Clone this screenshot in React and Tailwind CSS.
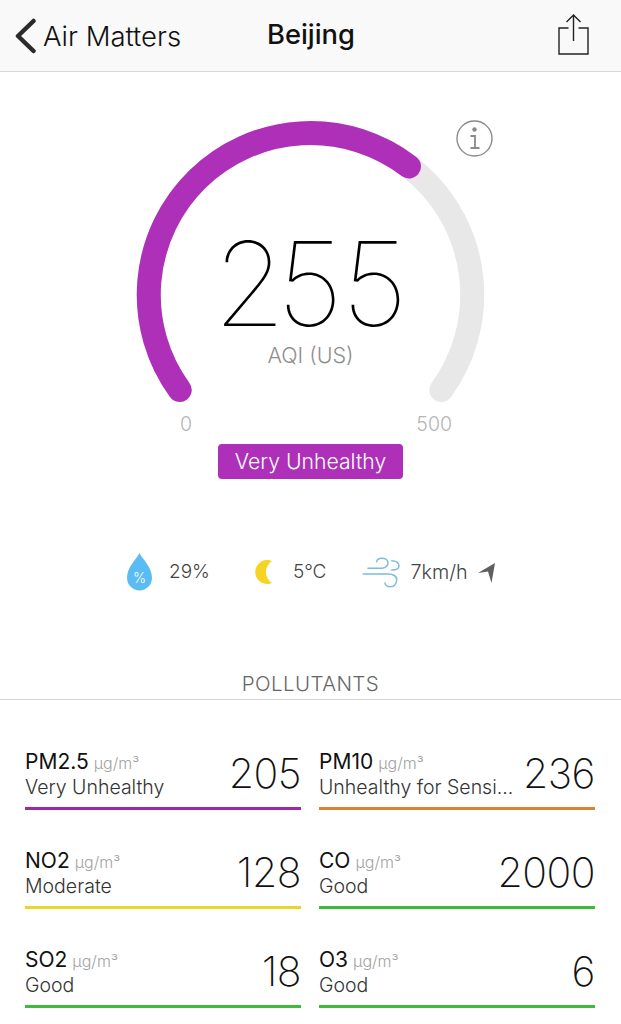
const font = { fontFamily: 'Inter, "Liberation Sans", sans-serif' };

const items = [
  ["PM2.5", "Very Unhealthy", "205", "bg-[#9c27a8]"],
  ["PM10", "Unhealthy for Sensi...", "236", "bg-[#e0812b]"],
  ["NO2", "Moderate", "128", "bg-[#e6d82a]"],
  ["CO", "Good", "2000", "bg-[#3dbb3a]"],
  ["SO2", "Good", "18", "bg-[#3dbb3a]"],
  ["O3", "Good", "6", "bg-[#3dbb3a]"],
];

function Item({ name, status, value, bar }) {
  return (
    <div className="h-[99px] flex flex-col justify-end">
      <div className="flex items-end justify-between h-[60px]">
        <div className="min-w-0 pb-[7px]">
          <div className="flex items-baseline gap-[5px] leading-[25px]">
            <span className="text-[21px] text-[#111]">{name}</span>
            <span className="text-[16px] font-light text-[#a3a3a3]">µg/m³</span>
          </div>
          <div className="text-[19.5px] font-light text-[#333] leading-[22px] whitespace-nowrap">{status}</div>
        </div>
        <div className="text-[41px] font-[250] text-[#111] leading-[50px] tracking-[-0.5px] pb-[7px]">{value}</div>
      </div>
      <div className={`h-[3px] mt-[2px] mb-[1px] ${bar}`} />
    </div>
  );
}

export default function App() {
  return (
    <div style={font} className="w-[621px] h-[1024px] bg-white overflow-hidden flex flex-col">
      <header className="relative h-[72px] bg-[#f9f9f9] border-b border-[#d9d9d9] flex items-center justify-between pl-[14px] pr-[32px] shrink-0">
        <div className="flex items-center gap-[6px]">
          <svg width="23" height="36" viewBox="0 0 23 36" fill="none">
            <path d="M19.5 3 L4 18 L19.5 33" stroke="#2b2b2b" strokeWidth="4.5" strokeLinecap="round" strokeLinejoin="round" />
          </svg>
          <span className="text-[27.5px] font-light text-[#111] mt-[2px]">Air Matters</span>
        </div>
        <span className="absolute left-[267px] top-[17px] text-[27.3px] font-medium text-[#111] leading-[36px]">Beijing</span>
        <svg width="31" height="41" viewBox="0 0 31 41" fill="none" stroke="#222" strokeWidth="1.4" className="mb-[2px]">
          <path d="M10.5 14 H1 V40 H30 V14 H20.5" />
          <path d="M15.5 1 V27 M8.5 8 L15.5 1 L22.5 8" />
        </svg>
      </header>

      <section className="relative h-[430px] shrink-0">
        <svg className="absolute left-0 top-0" width="621" height="430" viewBox="0 72 621 430" fill="none">
          <path d="M179.7 390 A161.75 161.75 0 1 1 441.3 390" stroke="#e8e8e8" strokeWidth="24" strokeLinecap="round" />
          <path d="M179.7 390 A161.75 161.75 0 0 1 409 166.55" stroke="#ae30b8" strokeWidth="24" strokeLinecap="round" />
          <circle cx="474.5" cy="138.5" r="17.5" stroke="#8a8a8a" strokeWidth="1.4" />
          <circle cx="474.5" cy="129.5" r="2.2" fill="#8a8a8a" />
          <path d="M470.5 136 H475 V148 M470.5 148 H479.5" stroke="#8a8a8a" strokeWidth="1.8" />
        </svg>
        <div className="relative flex flex-col items-center">
          <div className="mt-[153px] text-[117px] font-thin text-black leading-[118px] tracking-[-1px] pr-[1px]">
            <span className="tracking-[-9px]">2</span>55
          </div>
          <div className="mt-[-1px] text-[21.5px] font-light text-[#8f8f8f] leading-[26px]">AQI (US)</div>
          <div className="w-[347px] flex justify-between mt-[44px] text-[19.5px] font-light text-[#b5b5b5] leading-[24px] pl-[43px] pr-[32px]">
            <span>0</span>
            <span>500</span>
          </div>
          <div className="mt-[8px] w-[185px] h-[35px] rounded-[4px] bg-[#ae30b8] text-white text-[21.2px] font-light flex items-center justify-center">Very Unhealthy</div>
        </div>
      </section>

      <section className="h-[169px] shrink-0 flex items-start pt-[50px] pl-[126px] text-[19px] font-light text-[#444] leading-[40px]">
        <svg width="27" height="40" viewBox="0 0 27 40" className="mr-[16px]">
          <path d="M13.5 1 C17 8 26 15 26 26 A12.5 12.5 0 0 1 1 26 C1 15 10 8 13.5 1 Z" fill="#5bbcf5" />
          <text x="13.5" y="31" textAnchor="middle" fontSize="14" fill="#fff">%</text>
        </svg>
        <span>29%</span>
        <svg width="20" height="40" viewBox="0 0 20 40" className="ml-[44px] mr-[19px]">
          <path d="M18 9 A12 12 0 1 0 18 31 A13 13 0 0 1 18 9 Z" fill="#f5d423" />
        </svg>
        <span>5°C</span>
        <svg width="38" height="40" viewBox="0 0 38 40" fill="none" stroke="#7dbbdc" strokeWidth="1.5" strokeLinecap="round" className="ml-[36px] mr-[10px]">
          <path d="M1.3 22 H26 C31 22 35 24 34.7 28 C34.4 32 32 34.7 28 34.7 C25 34.7 23 33 23 31" />
          <path d="M6 16.3 H20 C24 15.5 26 13.5 26 10.7 C26 8 23 6.3 19.7 6.3 C17 6.3 15 8 14.7 9.7" />
          <path d="M29.7 18 C34 18 37 17 37 14 C37 11 34 8.7 29.7 8.7" />
        </svg>
        <span className="text-[19.8px]">7km/h</span>
        <svg width="18" height="40" viewBox="0 0 18 40" className="ml-[10px]">
          <path d="M17 11 L0 21 L10 19.5 L13.5 31 Z" fill="#5f5f5f" />
        </svg>
      </section>

      <div className="text-center text-[20.5px] font-light text-[#666] leading-[26px] tracking-[0.4px] pb-[2px] border-b border-[#d5d5d5] shrink-0">POLLUTANTS</div>

      <div className="grid grid-cols-[276px_276px] gap-x-[18px] px-[25px] mt-[12px]">
        {items.map(([n, s, v, b]) => (
          <Item key={n} name={n} status={s} value={v} bar={b} />
        ))}
      </div>
    </div>
  );
}
